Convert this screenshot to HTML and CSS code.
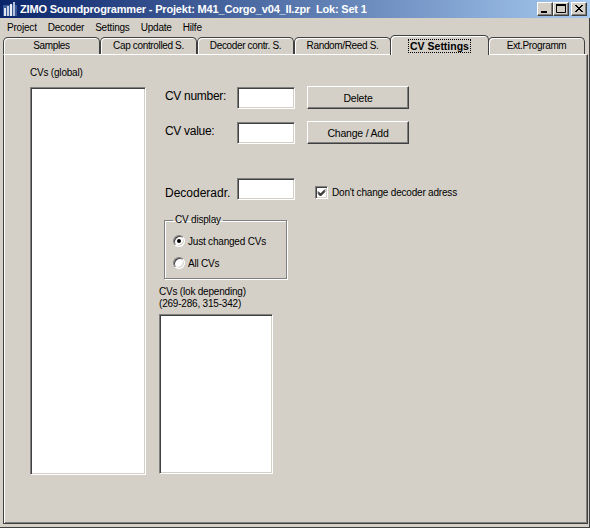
FILE: index.html
```html
<!DOCTYPE html>
<html lang="de">
<head>
    <meta charset="UTF-8">
    <title>ZIMO Soundprogrammer</title>
    <link rel="stylesheet" href="styles.css">
</head>
<body>
    <div class="window">
        <!-- Title bar -->
        <div class="titlebar">
            <svg class="app-icon" width="14" height="14" viewBox="0 0 14 14">
                <rect x="0" y="3" width="14" height="11" fill="#3a5a9a"/>
                <rect x="1" y="6" width="2" height="8" fill="#dfe6f2"/>
                <rect x="4" y="4" width="2" height="10" fill="#c8d2e4"/>
                <rect x="7" y="2" width="2" height="12" fill="#e8ecf4"/>
                <rect x="10" y="0" width="2" height="14" fill="#b4c0d8"/>
            </svg>
            <span class="title">ZIMO Soundprogrammer - Projekt: M41_Corgo_v04_II.zpr&nbsp; Lok: Set 1</span>
            <div class="caption-buttons">
                <div class="cap-btn">
                    <svg width="14" height="12" viewBox="0 0 14 12"><rect x="3" y="8" width="6" height="2" fill="#000"/></svg>
                </div>
                <div class="cap-btn">
                    <svg width="14" height="12" viewBox="0 0 14 12"><path d="M2.5 1.5h9v8h-9z" fill="none" stroke="#000"/><rect x="2" y="1" width="10" height="2" fill="#000"/></svg>
                </div>
                <div class="cap-btn close">
                    <svg width="14" height="12" viewBox="0 0 14 12"><path d="M3 2l7 7M4 2l7 7M10 2l-7 7M11 2l-7 7" stroke="#000" stroke-width="1"/></svg>
                </div>
            </div>
        </div>

        <div class="client">
            <!-- Menu -->
            <div class="menubar">
                <span class="menu-item">Project</span>
                <span class="menu-item">Decoder</span>
                <span class="menu-item">Settings</span>
                <span class="menu-item">Update</span>
                <span class="menu-item">Hilfe</span>
            </div>

            <!-- Tabs -->
            <div class="tabs">
                <div class="tab">Samples</div>
                <div class="tab">Cap controlled S.</div>
                <div class="tab">Decoder contr. S.</div>
                <div class="tab">Random/Reed S.</div>
                <div class="tab active"><span class="focus">CV Settings</span></div>
                <div class="tab">Ext.Programm</div>
            </div>

            <!-- CV Settings page -->
            <div class="panel">
                <div class="col-global">
                    <div class="caption">CVs (global)</div>
                    <div class="listbox list-global"></div>
                </div>

                <div class="col-edit">
                    <div class="row">
                        <span class="field-label">CV number:</span>
                        <div class="textbox"></div>
                        <div class="button">Delete</div>
                    </div>
                    <div class="row row-value">
                        <span class="field-label">CV value:</span>
                        <div class="textbox"></div>
                        <div class="button">Change / Add</div>
                    </div>
                    <div class="row row-adr">
                        <span class="field-label">Decoderadr.</span>
                        <div class="textbox"></div>
                        <label class="check">
                            <span class="checkbox">
                                <svg width="9" height="9" viewBox="0 0 9 9"><path d="M1 3.5l2.5 2.5l4.5-4.5M1 4.5l2.5 2.5l4.5-4.5M1 5.5l2.5 2.5l4.5-4.5" fill="none" stroke="#000" stroke-width="1"/></svg>
                            </span>
                            Don't change decoder adress
                        </label>
                    </div>

                    <fieldset class="group">
                        <legend>CV display</legend>
                        <div class="radio-row first"><span class="radio checked"></span>Just changed CVs</div>
                        <div class="radio-row"><span class="radio"></span>All CVs</div>
                    </fieldset>

                    <div class="caption lok-caption">CVs (lok depending)<br>(269-286, 315-342)</div>
                    <div class="listbox list-lok"></div>
                </div>
            </div>
        </div>
    </div>
</body>
</html>
```

FILE: styles.css
```css
body {
    margin: 0;
    padding: 0;
    font-family: "Liberation Sans", Arial, sans-serif;
    font-size: 10px;
    letter-spacing: -0.2px;
    color: #000;
}

.window {
    width: 590px;
    height: 528px;
    background: #d4d0c8;
    display: flex;
    flex-direction: column;
    overflow: hidden;
}

/* title bar */
.titlebar {
    height: 18px;
    flex: none;
    display: flex;
    align-items: center;
    background: linear-gradient(to right, #0a246a, #a6caf0);
    color: #fff;
}

.app-icon {
    margin: 0 3px 0 3px;
}

.title {
    font-weight: bold;
    font-size: 11px;
    letter-spacing: -0.18px;
    white-space: nowrap;
}

.caption-buttons {
    margin-left: auto;
    margin-right: 3px;
    display: flex;
}

.cap-btn {
    width: 16px;
    height: 14px;
    box-sizing: border-box;
    background: #d4d0c8;
    border-top: 1px solid #fff;
    border-left: 1px solid #fff;
    border-right: 1px solid #404040;
    border-bottom: 1px solid #404040;
    box-shadow: inset -1px -1px #808080;
    display: flex;
    align-items: center;
    justify-content: center;
}

.cap-btn.close {
    margin-left: 2px;
}

/* client area */
.client {
    flex: 1;
    display: flex;
    flex-direction: column;
    padding: 0 1px 3px 3px;
    border-right: 1px solid #404040;
    border-bottom: 1px solid #404040;
}

.menubar {
    height: 18px;
    display: flex;
    align-items: center;
    margin-left: -3px;
    padding-left: 2px;
    font-size: 10px;
}

.menu-item {
    padding: 0 5px;
    margin-right: 1px;
}

/* tabs */
.tabs {
    height: 18px;
    display: flex;
    align-items: flex-end;
    position: relative;
    z-index: 1;
}

.tab {
    width: 97px;
    height: 17px;
    box-sizing: border-box;
    border: 1px solid #404040;
    border-bottom: none;
    border-radius: 5px 5px 0 0;
    box-shadow: inset 1px 1px #fff;
    text-align: center;
    line-height: 16px;
    letter-spacing: -0.35px;
}

.tab.active {
    width: 99px;
    height: 20px;
    margin: 0 -1px -1px -1px;
    background: #d4d0c8;
    position: relative;
    z-index: 2;
    font-weight: bold;
    font-size: 10.5px;
    letter-spacing: 0;
    line-height: 20px;
}

.focus {
    border: 1px dotted #000;
    padding: 0 1px;
}

.panel {
    flex: 1;
    display: flex;
    border-top: 1px solid #fff;
    border-left: 1px solid #404040;
    border-right: 1px solid #404040;
    border-bottom: 1px solid #404040;
    box-shadow: inset 1px 0 #fff, inset -1px -1px #808080;
}

/* left column */
.col-global {
    margin-left: 26px;
    padding-top: 12px;
    width: 116px;
}

.caption {
    line-height: 12px;
}

.listbox {
    box-sizing: border-box;
    background: #fff;
    border-top: 1px solid #808080;
    border-left: 1px solid #808080;
    border-right: 1px solid #fff;
    border-bottom: 1px solid #fff;
    box-shadow: inset 1px 1px #404040, inset -1px -1px #d4d0c8;
}

.list-global {
    margin-top: 8px;
    width: 116px;
    height: 388px;
}

/* right column */
.col-edit {
    margin-left: 13px;
    padding-top: 31px;
    display: flex;
    flex-direction: column;
    align-items: flex-start;
}

.row {
    display: flex;
    align-items: center;
    height: 23px;
}

.row-value {
    margin-top: 12px;
}

.row-adr {
    margin-top: 35px;
}

.field-label {
    width: 78px;
    box-sizing: border-box;
    padding-left: 6px;
    font-size: 12px;
    letter-spacing: -0.3px;
    margin-top: -4px;
}

.row-adr .field-label {
    margin-top: 4px;
    letter-spacing: 0;
}

.textbox {
    width: 58px;
    height: 22px;
    box-sizing: border-box;
    background: #fff;
    border-top: 1px solid #808080;
    border-left: 1px solid #808080;
    border-right: 1px solid #fff;
    border-bottom: 1px solid #fff;
    box-shadow: inset 1px 1px #404040, inset -1px -1px #d4d0c8;
}

.row-adr .textbox {
    margin-top: -4px;
}

.button {
    width: 102px;
    height: 23px;
    margin-left: 12px;
    box-sizing: border-box;
    border-top: 1px solid #fff;
    border-left: 1px solid #fff;
    border-right: 1px solid #404040;
    border-bottom: 1px solid #404040;
    box-shadow: inset -1px -1px #808080;
    display: flex;
    align-items: center;
    justify-content: center;
    font-size: 10.5px;
}

.check {
    display: flex;
    align-items: center;
    margin-left: 20px;
    margin-top: 3px;
}

.checkbox {
    width: 13px;
    height: 13px;
    box-sizing: border-box;
    margin-right: 4px;
    background: #fff;
    border-top: 1px solid #808080;
    border-left: 1px solid #808080;
    border-right: 1px solid #fff;
    border-bottom: 1px solid #fff;
    box-shadow: inset 1px 1px #404040, inset -1px -1px #d4d0c8;
    display: flex;
    align-items: center;
    justify-content: center;
}

/* group box */
.group {
    margin: 12px 0 0 5px;
    padding: 0 0 6px 8px;
    width: 123px;
    box-sizing: border-box;
    border: 1px solid #808080;
    box-shadow: inset 1px 1px #fff, 1px 1px #fff;
}

.group legend {
    padding: 0 2px;
    line-height: 12px;
}

.radio-row {
    display: flex;
    align-items: center;
    height: 18px;
    margin-top: 4px;
}

.radio-row.first {
    margin-top: 6px;
}

.radio {
    width: 12px;
    height: 12px;
    box-sizing: border-box;
    margin-right: 3px;
    border-radius: 50%;
    background: #fff;
    border: 1px solid;
    border-color: #808080 #fff #fff #808080;
    box-shadow: inset 1px 1px #404040, inset -1px -1px #d4d0c8;
    position: relative;
}

.radio.checked::after {
    content: "";
    position: absolute;
    left: 3px;
    top: 3px;
    width: 4px;
    height: 4px;
    border-radius: 50%;
    background: #000;
}

.lok-caption {
    margin-top: 7px;
}

.list-lok {
    margin-top: 4px;
    width: 114px;
    height: 160px;
}
```
